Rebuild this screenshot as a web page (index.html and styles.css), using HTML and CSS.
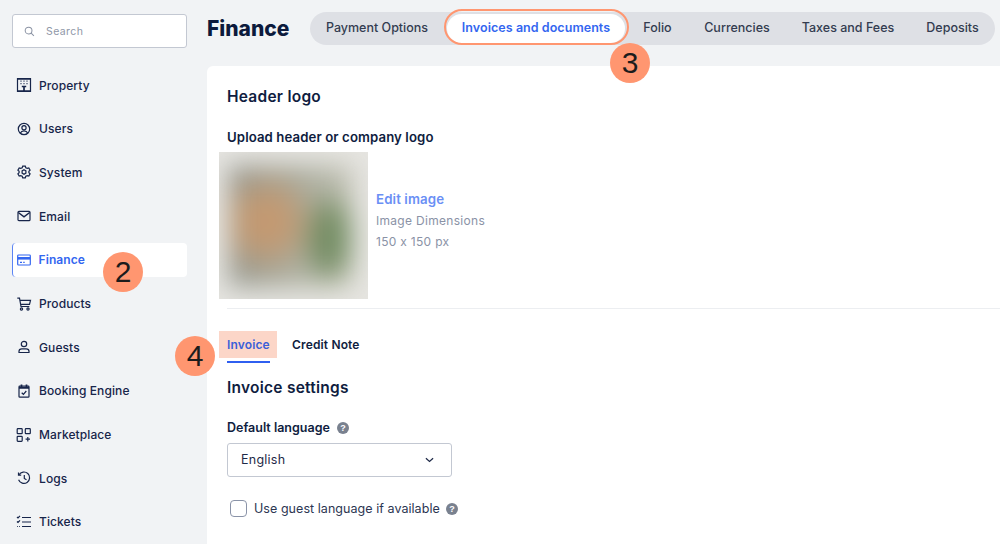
FILE: index.html
```html
<!DOCTYPE html>
<html lang="en">
<head>
<meta charset="utf-8">
<title>Finance</title>
<link rel="stylesheet" href="styles.css">
</head>
<body>
<div class="app">
  <aside class="sidebar">
    <div class="search">
      <svg class="search-icon" viewBox="0 0 12 12"><circle cx="5" cy="5" r="3.7"/><path d="M7.8 7.8 10.8 10.8"/></svg>
      <span>Search</span>
    </div>
    <nav class="nav">
      <a class="nav-item"><svg class="ico" viewBox="0 0 16 16"><path d="M1.5 1.5h13v13h-13z"/><path class="thick" d="M1 1.800h14M1 14.200h14"/><path d="M4.500 4.200h1M7.500 4.200h1M10.500 4.200h1M4.500 6.600h1M7.500 6.600h1M10.500 6.600h1"/><path class="thick" d="M8 9v5M5.800 9.500h4.400"/></svg>Property</a>
      <a class="nav-item"><svg class="ico" viewBox="0 0 16 16"><circle cx="8" cy="8" r="5.700"/><circle cx="8" cy="6.800" r="2.100"/><path d="M4.200 12.200c.8-1.600 2.200-2.300 3.800-2.300s3 .7 3.800 2.300"/></svg>Users</a>
      <a class="nav-item"><svg class="ico" viewBox="0 0 16 16"><path d="M6.700 2.200h2.600l.5 1.500 1.500.7 1.500-.5 1.300 2.200-1.200 1.100v1.600l1.200 1.100-1.300 2.200-1.500-.5-1.500.7-.5 1.500H6.700l-.5-1.500-1.500-.7-1.500.5-1.300-2.200 1.200-1.100V7.200L1.900 6.100l1.300-2.200 1.500.5 1.500-.7z"/><path d="M8 5.800l1.900 1.100v2.200L8 10.200 6.100 9.100V6.900z"/></svg>System</a>
      <a class="nav-item"><svg class="ico" viewBox="0 0 16 16"><rect x="2" y="3.300" width="12" height="9.400" rx="1"/><path class="mid" d="M2.300 4.500 8 8.800l5.700-4.300"/></svg>Email</a>
      <a class="nav-item active"><svg class="ico" viewBox="0 0 16 16"><rect x="1.700" y="3" width="12.600" height="10" rx=".8"/><path class="bar" d="M1.700 6.300h12.600"/><path d="M4 10.400h2M7.200 10.400h1.500"/></svg>Finance</a>
      <a class="nav-item"><svg class="ico" viewBox="0 0 16 16"><path d="M1.300 2.200h2.200l1.500 8.300h8.300M3.900 4.400h10.600l-1 4H4.600"/><circle cx="5.500" cy="13" r="1.100"/><circle cx="12" cy="13" r="1.100"/></svg>Products</a>
      <a class="nav-item"><svg class="ico" viewBox="0 0 16 16"><circle cx="8" cy="5" r="2.700"/><path d="M3 13.500v-1.200c0-1.500 1.200-2.500 2.800-2.500h4.400c1.600 0 2.800 1 2.800 2.500v1.200z"/></svg>Guests</a>
      <a class="nav-item"><svg class="ico" viewBox="0 0 16 16"><rect x="3" y="3.200" width="10" height="11" rx=".8"/><path class="thick" d="M3 4.800h10M5.500 1.500v2.500M10.500 1.500v2.500"/><path d="M5.700 9.800 7.400 11.300 10.300 8"/></svg>Booking Engine</a>
      <a class="nav-item"><svg class="ico" viewBox="0 0 16 16"><rect x="1.200" y="1.700" width="5" height="5" rx=".7"/><rect x="9.300" y="1.700" width="5" height="5" rx=".7"/><rect x="1.200" y="9.300" width="5" height="5" rx=".7"/><path d="M11.800 10v4.400M9.600 12.200H14"/></svg>Marketplace</a>
      <a class="nav-item"><svg class="ico" viewBox="0 0 16 16"><path d="M3 4.800A5.700 5.700 0 1 1 2.600 9.800"/><path d="M2.500 2.500v2.700h2.700M8.300 5v3.400l2.200 1.300"/></svg>Logs</a>
      <a class="nav-item"><svg class="ico" viewBox="0 0 16 16"><path d="M6 3.500h9M6 8h9M6 12.500h9M1 3l1 1 2-2.200M1 7.500l1 1 2-2.200M1 12.500h.8M3 12.500h.8"/></svg>Tickets</a>
    </nav>
  </aside>
  <main class="main">
    <header class="topbar">
      <h1>Finance</h1>
      <div class="tabs">
        <a class="tab t1">Payment Options</a>
        <a class="tab t2 active">Invoices and documents</a>
        <a class="tab t3">Folio</a>
        <a class="tab t4">Currencies</a>
        <a class="tab t5">Taxes and Fees</a>
        <a class="tab t6">Deposits</a>
      </div>
    </header>
    <section class="panel">
      <h2 class="logo-title">Header logo</h2>
      <h3 class="upload-title">Upload header or company logo</h3>
      <div class="logo-row">
        <div class="thumb"><div class="thumb-blur"></div></div>
        <div class="logo-info">
          <a class="edit">Edit image</a>
          <span>Image Dimensions</span>
          <span>150 x 150 px</span>
        </div>
      </div>
      <hr class="rule">
      <div class="subtabs">
        <a class="subtab active">Invoice</a>
        <a class="subtab">Credit Note</a>
      </div>
      <h2 class="settings-title">Invoice settings</h2>
      <label class="field-label">Default language <svg class="help" viewBox="0 0 12 12"><circle cx="6" cy="6" r="6"/><text x="6" y="9" text-anchor="middle">?</text></svg></label>
      <div class="select"><span>English</span><svg class="chev" viewBox="0 0 10 6"><path d="M1 1l4 3.500L9 1"/></svg></div>
      <div class="check-row"><span class="checkbox"></span><span>Use guest language if available</span><svg class="help" viewBox="0 0 12 12"><circle cx="6" cy="6" r="6"/><text x="6" y="9" text-anchor="middle">?</text></svg></div>
    </section>
  </main>
</div>
<div class="ring"></div>
<div class="badge b2">2</div>
<div class="badge b3">3</div>
<div class="badge b4">4</div>
</body>
</html>
```
FILE: styles.css
```css
* { box-sizing: border-box; }
html, body { margin: 0; height: 544px; overflow: hidden; }
body { font-family: Inter, "Liberation Sans", sans-serif; color: #0f1d40; background: #f1f3f5; position: relative; }
.app { display: flex; height: 544px; }
.sidebar { width: 207px; flex: none; padding: 14px 20px 0 12px; }
.search { height: 34px; background: #fff; border: 1px solid #c3c8d2; border-radius: 3px; display: flex; align-items: center; padding-left: 11px; gap: 11px; font-size: 10.500px; letter-spacing: .4px; color: #8f97a8; }
.search-icon { width: 11px; height: 11px; fill: none; stroke: #8a92a3; stroke-width: 1.100; }
.nav { margin-top: 20.100px; display: flex; flex-direction: column; gap: 9.700px; }
.nav-item { height: 34px; display: flex; align-items: center; gap: 7px; padding-left: 4px; font-size: 12px; font-weight: 500; letter-spacing: .1px; color: #17254a; border-radius: 4px; }
.ico { width: 16px; height: 16px; flex: none; fill: none; stroke: #17254a; stroke-width: 1.200; }
.ico .thick { stroke-width: 1.700; }
.ico .mid { stroke-width: 1.500; }
.ico .bar { stroke-width: 2.600; }
.nav-item.active { background: #fff; color: #3366f0; border-left: 1.500px solid #5b84f5; font-weight: 600; padding-left: 2.500px; }
.nav-item.active .ico { stroke: #3366f0; }
.main { flex: 1; min-width: 0; display: flex; flex-direction: column; }
.topbar { height: 66px; flex: none; display: flex; align-items: flex-start; }
h1 { margin: 15px 0 0; width: 103px; flex: none; font-size: 21px; line-height: 27px; font-weight: 800; color: #0c1a3c; }
.tabs { margin-top: 12px; height: 33px; width: 685px; flex: none; background: #dee0e5; border-radius: 17px; display: flex; align-items: center; font-size: 12.500px; font-weight: 500; color: #333c50; }
.tab { display: flex; align-items: center; justify-content: center; height: 29px; padding-bottom: 2px; white-space: nowrap; }
.t1 { width: 137px; padding-right: 3px; }
.t2 { width: 178px; background: #fff; color: #3366f0; border-radius: 15px; font-weight: 600; letter-spacing: .05px; }
.t3 { width: 65px; }
.t4 { width: 94px; }
.t5 { width: 128px; }
.t6 { width: 81px; }
.panel { flex: 1; background: #fff; border-top-left-radius: 6px; padding: 20px 0 0 12px; isolation: isolate; }
h2, h3 { margin: 0; color: #0f1d40; }
.logo-title { margin-left: 8px; font-size: 15.500px; line-height: 21px; font-weight: 600; letter-spacing: .25px; }
.upload-title { margin: 20px 0 0 8px; font-size: 13.200px; line-height: 20px; font-weight: 600; letter-spacing: .1px; }
.logo-row { display: flex; align-items: center; gap: 8px; margin-top: 5px; }
.thumb { width: 149px; height: 147px; overflow: hidden; background: #e6e5e1; flex: none; display: flex; padding: 14px 16px 12px 10px; }
.thumb-blur { flex: 1; filter: blur(13px);
  background:
    radial-gradient(circle at 30% 46%, #c8986e 0, #c09a74 22%, transparent 48%),
    radial-gradient(ellipse 24% 40% at 82% 60%, #6c8a60 0, #7a9068 60%, transparent 100%),
    linear-gradient(100deg, #8e918a, #a8aa9c 50%, #c8c8ba),
    #999; }
.logo-info { display: flex; flex-direction: column; padding-bottom: 12px; font-size: 12px; line-height: 21px; color: #8a92a6; letter-spacing: .3px; }
.edit { color: #6a8ff5; font-size: 13.300px; line-height: 22px; font-weight: 600; letter-spacing: .1px; }
.rule { margin: 9px 0 0 8px; border: 0; height: 1px; background: #eceef1; }
.subtabs { display: flex; gap: 22px; margin: 21px 0 0 8px; height: 33px; font-size: 12px; font-weight: 600; }
.subtab { line-height: 29px; height: 33px; letter-spacing: .15px; color: #0f1d40; }
.subtab.active { width: 43px; color: #3b5fd8; border-bottom: 2.500px solid #2f5ff0; position: relative; }
.subtab.active::before { content: ""; position: absolute; z-index: -1; left: -8px; top: 1px; width: 58px; height: 27px; background: #fcd6c8; }
.settings-title { margin: 14px 0 0 8px; font-size: 15.500px; line-height: 22px; font-weight: 600; letter-spacing: .25px; }
.field-label { display: flex; align-items: center; gap: 7px; margin: 20px 0 0 8px; font-size: 12.500px; line-height: 18px; font-weight: 600; }
.help { width: 12px; height: 12px; fill: #79818f; }
.help text { fill: #fff; font-size: 9px; font-weight: 700; font-family: "Liberation Sans", sans-serif; }
.select { margin: 6px 0 0 8px; width: 225px; height: 34px; border: 1px solid #c3c8d2; border-radius: 3px; display: flex; align-items: center; justify-content: space-between; padding: 0 17px 2px 13px; font-size: 12.500px; letter-spacing: .25px; color: #1f2a48; }
.chev { width: 9px; height: 6px; fill: none; stroke: #1f2a48; stroke-width: 1.400; margin-top: 2px; }
.check-row { display: flex; align-items: center; margin: 23px 0 0 11px; font-size: 12.500px; letter-spacing: .05px; color: #2c3652; }
.checkbox { width: 17px; height: 17px; border: 1.500px solid #8a93a8; border-radius: 4px; margin-right: 7px; background: #fff; }
.check-row .help { margin-left: 6px; }
.ring { position: absolute; left: 444px; top: 9px; width: 185px; height: 36px; border: 2px solid #ff9670; border-radius: 18px; }
.badge { position: absolute; width: 40px; height: 40px; border-radius: 50%; background: #ff9670; color: #1c1c1c; display: flex; align-items: center; justify-content: center; font-family: "Liberation Sans", sans-serif; font-size: 30px; }
.b2 { left: 103px; top: 252px; }
.b3 { left: 610px; top: 43px; }
.b4 { left: 175px; top: 336px; }
```
